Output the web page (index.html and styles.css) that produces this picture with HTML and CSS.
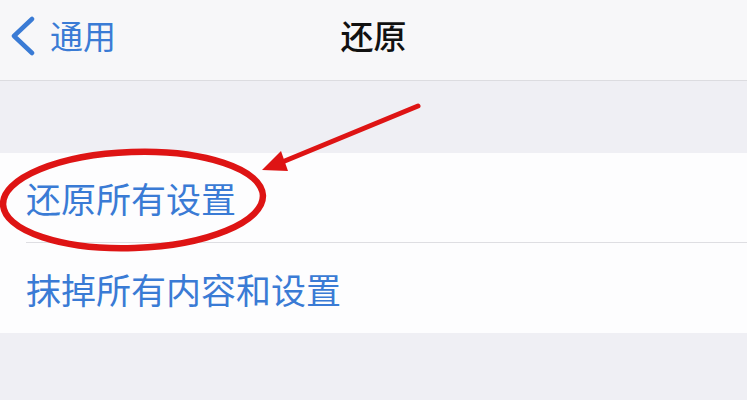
FILE: index.html
```html
<!DOCTYPE html>
<html lang="zh-CN">
<head>
  <meta charset="UTF-8">
  <title>还原</title>
  <link rel="stylesheet" href="styles.css">
</head>
<body>
  <div class="screen">
    <div class="navbar">
      <a class="back" href="#">
        <svg class="chevron" width="26" height="40" viewBox="0 0 26 40">
          <polyline points="22,3 4,20 22,37" fill="none" stroke="#3a7bd5" stroke-width="4.5" stroke-linecap="round" stroke-linejoin="round"/>
        </svg>
        <span>通用</span>
      </a>
      <div class="title">还原</div>
      <div></div>
    </div>

    <div class="spacer"></div>

    <div class="group">
      <div class="row">还原所有设置</div>
      <div class="row">抹掉所有内容和设置</div>
    </div>

    <!-- red markup drawn over the screenshot -->
    <svg class="markup" width="747" height="400" viewBox="0 0 747 400">
      <ellipse cx="133" cy="200" rx="130" ry="48" fill="none" stroke="#de1414" stroke-width="6.5" transform="rotate(-2 133 200)"/>
      <line x1="418" y1="106" x2="275" y2="165" stroke="#de1414" stroke-width="5" stroke-linecap="round"/>
      <polygon points="262,170 281,151 288,171" fill="#de1414"/>
    </svg>
  </div>
</body>
</html>
```

FILE: styles.css
```css
body { margin: 0; background: #efeff4; font-family: "Noto Sans CJK SC", "Noto Sans", sans-serif; }
.screen { position: relative; width: 747px; height: 400px; overflow: hidden; }

.navbar { height: 81px; box-sizing: border-box; padding-bottom: 9px; background: #f7f7f9; border-bottom: 1px solid #dcdce0; display: grid; grid-template-columns: 1fr auto 1fr; align-items: center; }
.back { display: flex; align-items: center; gap: 14px; padding-left: 10px; color: #3a7bd5; text-decoration: none; font-size: 33px; }
.back span { line-height: 1; }
.title { font-size: 33px; font-weight: 500; color: #111; line-height: 1; }

.spacer { height: 72px; }

.group { background: #fdfdfe; }
.row { height: 90px; margin-left: 26px; display: flex; align-items: center; font-size: 35px; color: #3a7bd5; border-bottom: 1px solid #dedee2; box-sizing: border-box; }
.row:last-child { border-bottom: none; }

.markup { position: absolute; top: 0; left: 0; pointer-events: none; }
```
